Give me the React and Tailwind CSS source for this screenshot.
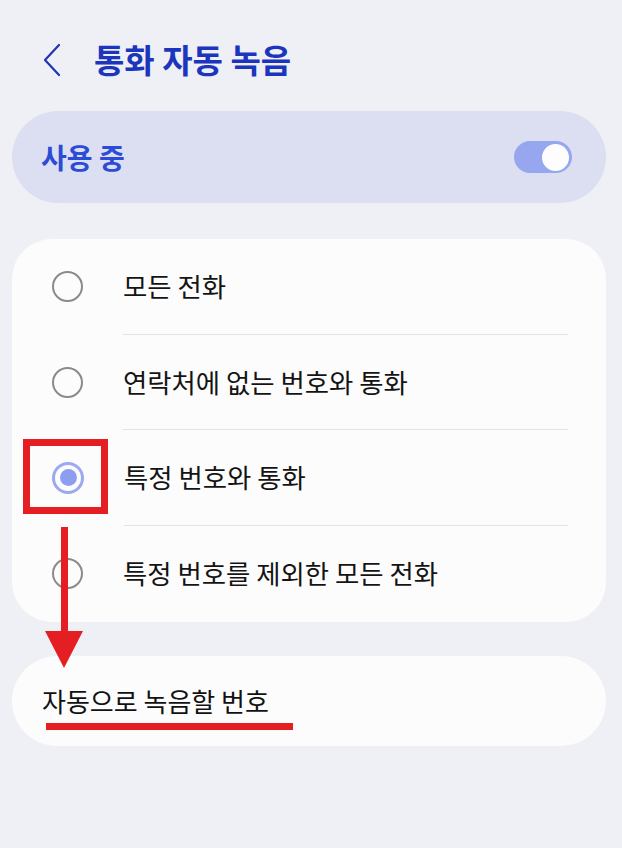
import { useState } from 'react';

const font = { fontFamily: '"Noto Sans CJK KR", "Noto Sans", sans-serif' };

const options = [
  '모든 전화',
  '연락처에 없는 번호와 통화',
  '특정 번호와 통화',
  '특정 번호를 제외한 모든 전화',
];

const Radio = ({ checked }) =>
  checked ? (
    <div className="w-[32px] h-[32px] rounded-full border-[3.5px] border-[#9aa9f2] flex items-center justify-center">
      <div className="w-[17px] h-[17px] rounded-full bg-[#8d9ef0]" />
    </div>
  ) : (
    <div className="w-[31px] h-[31px] rounded-full border-[2.5px] border-[#8a8a8a]" />
  );

const App = () => {
  const [selected, setSelected] = useState(2);
  const [enabled, setEnabled] = useState(true);

  return (
    <div className="relative w-[622px] h-[848px] bg-[#eff0f6] pl-3 pr-4" style={font}>
      {/* Header */}
      <div className="h-[111px] pt-[8px] flex items-center">
        <svg width="24" height="34" viewBox="0 0 24 34" className="ml-[30px]">
          <polyline
            points="17,2 3,17 17,32"
            fill="none"
            stroke="#1e34b2"
            strokeWidth="2.2"
            strokeLinecap="round"
            strokeLinejoin="round"
          />
        </svg>
        <h1 className="ml-[28px] text-[33px] font-bold text-[#1b36bd] leading-none">
          통화 자동 녹음
        </h1>
      </div>

      {/* Master switch */}
      <div className="h-[92px] rounded-full bg-[#dcdff1] flex items-center justify-between pl-[29px] pr-[34px]">
        <span className="text-[28px] font-bold text-[#2d4cd6] leading-none">사용 중</span>
        <button
          onClick={() => setEnabled(!enabled)}
          className="w-[58px] h-[32px] rounded-full bg-[#96a7f0] flex items-center justify-end px-[3px]"
        >
          <span className="w-[27px] h-[27px] rounded-full bg-[#fdfdfd]" />
        </button>
      </div>

      {/* Options */}
      <div className="mt-[36px] h-[383px] rounded-[40px] bg-[#fcfcfc]">
        {options.map((label, i) => (
          <div
            key={label}
            onClick={() => setSelected(i)}
            className="h-[95.5px] flex items-center pl-[40px] cursor-pointer"
          >
            <Radio checked={selected === i} />
            <div
              className={`ml-[40px] mr-[38px] flex-1 h-full flex items-center ${
                i < options.length - 1 ? 'border-b border-[#e3e3e6]' : ''
              }`}
            >
              <span className="text-[26.4px] text-[#141414] leading-none">{label}</span>
            </div>
          </div>
        ))}
      </div>

      {/* Number list */}
      <div className="mt-[34px] h-[90px] rounded-full bg-[#fcfcfc] flex items-center pl-[30px]">
        <span className="text-[26px] text-[#111] leading-none">자동으로 녹음할 번호</span>
      </div>

      {/* Annotations */}
      <div className="absolute left-[23px] top-[439px] w-[85px] h-[75px] border-[7px] border-[#e41e22]" />
      <div className="absolute left-[61px] top-[527px] w-[7px] h-[106px] bg-[#e41e22]" />
      <svg className="absolute left-[45px] top-[631px]" width="38" height="38" viewBox="0 0 38 38">
        <polygon points="0,0 38,0 19,37" fill="#e41e22" />
      </svg>
      <div className="absolute left-[46px] top-[723px] w-[247px] h-[7px] bg-[#e41e22]" />
    </div>
  );
};

export default App;
